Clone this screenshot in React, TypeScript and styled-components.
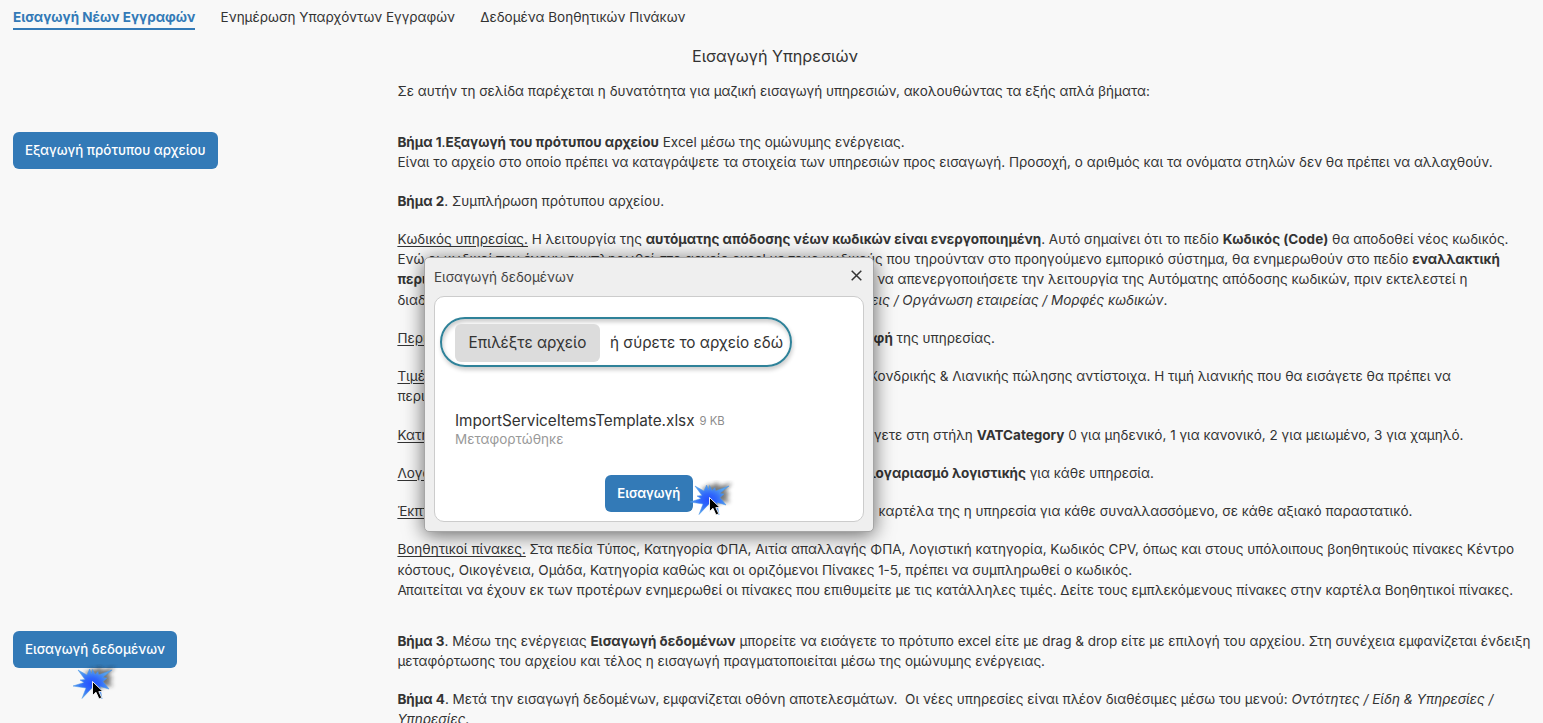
import React from 'react';
import styled, {createGlobalStyle} from "styled-components";

const theme = {
    primary: "#337ab7",
    text: "#333333",
    page: "#f8f8f8",
}

const GlobalStyle = createGlobalStyle`
  * {
    box-sizing: border-box;
  }

  body {
    margin: 0;
    height: 723px;
    overflow: hidden;
    background: ${theme.page};
    color: ${theme.text};
    font-family: Inter, "Liberation Sans", sans-serif;
    font-size: 13.5px;
    line-height: 1.5;
  }
`

const ClickMark = () => (
    <svg width="48" height="44" viewBox="0 0 48 44">
        <defs>
            <radialGradient id="burst" cx="0.48" cy="0.5" r="0.5">
                <stop offset="0" stopColor="#2450ff"/>
                <stop offset="0.4" stopColor="#2f66fb"/>
                <stop offset="1" stopColor="#56a4ee"/>
            </radialGradient>
            <filter id="soft" x="-30%" y="-30%" width="160%" height="160%">
                <feGaussianBlur stdDeviation="2"/>
            </filter>
        </defs>
        <path
            d="M14 7L19 8L20 4L24 6L29 2L31 6L44 3L37 11L42 14L38 17L42 22L33 22L27 26L20 22L14 19L17 15Z"
            fill="#222" opacity="0.6" filter="url(#soft)"/>
        <path
            d="M7 6L16 11L18.600 5L20.500 10L21.500 5.500L24 10.500L27 7.500L27.500 11L41 6L31.500 13.500L36 14L32 17.500L38 25L29 22.500L31 35L26 26L21 24L11 34.500L15 24L2 22L13 18.500L9 16L14 15.500Z"
            fill="url(#burst)" stroke="#4a94e6" strokeWidth="0.5"/>
        <path d="M21.500 17.500V31.500L25 28.300L28 35L30.800 33.700L27.800 27.600H32Z"
              fill="#000" stroke="#fff" strokeWidth="0.9"/>
    </svg>
)

const App = () => {
    return (
        <>
            <GlobalStyle/>
            <Tabs>
                <Tab $active>Εισαγωγή Νέων Εγγραφών</Tab>
                <Tab>Ενημέρωση Υπαρχόντων Εγγραφών</Tab>
                <Tab>Δεδομένα Βοηθητικών Πινάκων</Tab>
            </Tabs>
            <Title>Εισαγωγή Υπηρεσιών</Title>
            <Steps>
                <Side/>
                <Content>
                    <p>Σε αυτήν τη σελίδα παρέχεται η δυνατότητα για μαζική εισαγωγή υπηρεσιών, ακολουθώντας τα εξής απλά βήματα:</p>
                </Content>

                <Side>
                    <Button>Εξαγωγή πρότυπου αρχείου</Button>
                </Side>
                <Content>
                    <p>
                        <b>Βήμα 1</b>.<b>Εξαγωγή του πρότυπου αρχείου</b> Excel μέσω της ομώνυμης ενέργειας.<br/>
                        Είναι το αρχείο στο οποίο πρέπει να καταγράψετε τα στοιχεία των υπηρεσιών προς εισαγωγή. Προσοχή, ο αριθμός και τα ονόματα στηλών δεν θα πρέπει να αλλαχθούν.
                    </p>
                    <p><b>Βήμα 2</b>. Συμπλήρωση πρότυπου αρχείου.</p>
                    <div>
                        <u>Κωδικός υπηρεσίας.</u> Η λειτουργία της <b>αυτόματης απόδοσης νέων κωδικών είναι ενεργοποιημένη</b>. Αυτό σημαίνει ότι το πεδίο <b>Κωδικός (Code)</b> θα αποδοθεί νέος κωδικός.<br/>
                        Ενώ οι κωδικοί που έχουν συμπληρωθεί στο αρχείο excel με τους κωδικούς που τηρούνταν στο προηγούμενο εμπορικό σύστημα, θα ενημερωθούν στο πεδίο <b>εναλλακτική</b>
                        <Split $width={1070}>
                            <b>περι</b>
                            <span>να απενεργοποιήσετε την λειτουργία της Αυτόματης απόδοσης κωδικών, πριν εκτελεστεί η</span>
                        </Split>
                        <Split $width={770}>
                            <span>διαδ</span>
                            <span><i>Ρυθμίσεις / Οργάνωση εταιρείας / Μορφές κωδικών</i>.</span>
                        </Split>
                    </div>
                    <Split $width={597.5}>
                        <u>Περιγ</u>
                        <span><b>περιγραφή</b> της υπηρεσίας.</span>
                    </Split>
                    <div>
                        <Split $width={1053.5}>
                            <u>Τιμές</u>
                            <span>Χονδρικής &amp; Λιανικής πώλησης αντίστοιχα. Η τιμή λιανικής που θα εισάγετε θα πρέπει να</span>
                        </Split>
                        περι
                    </div>
                    <Split $width={1066}>
                        <u>Κατη</u>
                        <span>εισάγετε στη στήλη <b>VATCategory</b> 0 για μηδενικό, 1 για κανονικό, 2 για μειωμένο, 3 για χαμηλό.</span>
                    </Split>
                    <Split $width={756.5}>
                        <u>Λογα</u>
                        <span><b>λογαριασμό λογιστικής</b> για κάθε υπηρεσία.</span>
                    </Split>
                    <Split $width={1015}>
                        <u>Έκπτ</u>
                        <span>καρτέλα της η υπηρεσία για κάθε συναλλασσόμενο, σε κάθε αξιακό παραστατικό.</span>
                    </Split>
                    <p>
                        <u>Βοηθητικοί πίνακες.</u> Στα πεδία Τύπος, Κατηγορία ΦΠΑ, Αιτία απαλλαγής ΦΠΑ, Λογιστική κατηγορία, Κωδικός CPV, όπως και στους υπόλοιπους βοηθητικούς πίνακες Κέντρο<br/>
                        κόστους, Οικογένεια, Ομάδα, Κατηγορία καθώς και οι οριζόμενοι Πίνακες 1-5, πρέπει να συμπληρωθεί ο κωδικός.<br/>
                        Απαιτείται να έχουν εκ των προτέρων ενημερωθεί οι πίνακες που επιθυμείτε με τις κατάλληλες τιμές. Δείτε τους εμπλεκόμενους πίνακες στην καρτέλα Βοηθητικοί πίνακες.
                    </p>
                </Content>

                <Side>
                    <Button>Εισαγωγή δεδομένων</Button>
                    <Mark $left={71} $top={664}><ClickMark/></Mark>
                </Side>
                <Content>
                    <p>
                        <b>Βήμα 3</b>. Μέσω της ενέργειας <b>Εισαγωγή δεδομένων</b> μπορείτε να εισάγετε το πρότυπο excel είτε με drag &amp; drop είτε με επιλογή του αρχείου. Στη συνέχεια εμφανίζεται ένδειξη<br/>
                        μεταφόρτωσης του αρχείου και τέλος η εισαγωγή πραγματοποιείται μέσω της ομώνυμης ενέργειας.
                    </p>
                    <p>
                        <b>Βήμα 4</b>. Μετά την εισαγωγή δεδομένων, εμφανίζεται οθόνη αποτελεσμάτων.&nbsp; Οι νέες υπηρεσίες είναι πλέον διαθέσιμες μέσω του μενού: <i>Οντότητες / Είδη &amp; Υπηρεσίες /<br/>
                        Υπηρεσίες</i>.
                    </p>
                </Content>
            </Steps>

            <Modal>
                <ModalHeader>
                    <span>Εισαγωγή δεδομένων</span>
                    <svg width="11" height="11" viewBox="0 0 11 11">
                        <path d="M0.700 0.700L10.300 10.300M10.300 0.700L0.700 10.300" stroke="#333" strokeWidth="1.5"/>
                    </svg>
                </ModalHeader>
                <ModalBody>
                    <DropZone>
                        <PickButton>Επιλέξτε αρχείο</PickButton>
                        <span>ή σύρετε το αρχείο εδώ</span>
                    </DropZone>
                    <FileRow>
                        <FileName>ImportServiceItemsTemplate.xlsx</FileName>
                        <FileSize>9 KB</FileSize>
                    </FileRow>
                    <FileStatus>Μεταφορτώθηκε</FileStatus>
                    <SubmitButton>Εισαγωγή</SubmitButton>
                </ModalBody>
            </Modal>
            <Mark $left={688} $top={480}><ClickMark/></Mark>
        </>
    );
};

export default App;


const Tabs = styled.nav`
  display: flex;
  gap: 25.200px;
  height: 46px;
  padding: 7px 13px 0;
`

const Tab = styled.a<{ $active?: boolean }>`
  height: 23px;
  white-space: nowrap;
  color: ${props => props.$active ? theme.primary : theme.text};
  font-weight: ${props => props.$active ? 700 : 400};
  border-bottom: ${props => props.$active ? `2px solid ${theme.primary}` : "none"};
`

const Title = styled.h1`
  margin: 0;
  padding-left: 7px;
  height: 35.400px;
  font-size: 16.200px;
  font-weight: 400;
  line-height: 20px;
  text-align: center;
`

const Steps = styled.div`
  display: grid;
  grid-template-columns: 384.400px 1fr;
  row-gap: 30.450px;
  padding-left: 13px;
`

const Side = styled.div``

const Content = styled.div`
  display: flex;
  flex-direction: column;
  gap: 18px;
  white-space: nowrap;

  p {
    margin: 0;
  }

  b {
    font-weight: 700;
  }

  u {
    text-underline-offset: 2px;
  }
`

// line whose middle lies under the dialog
const Split = styled.div<{ $width: number }>`
  display: flex;
  justify-content: space-between;
  width: ${props => props.$width}px;
`

const Button = styled.button`
  height: 37px;
  padding: 0 12px 1px;
  border: none;
  border-radius: 6px;
  background: ${theme.primary};
  color: #fff;
  font-family: inherit;
  font-size: 13.35px;
  font-weight: 500;
  white-space: nowrap;
`

const Modal = styled.div`
  position: absolute;
  left: 424px;
  top: 257px;
  width: 450px;
  height: 275px;
  padding: 0 9px 9px;
  display: flex;
  flex-direction: column;
  background: #efefef;
  border: 1px solid #a5a5a5;
  border-radius: 5px;
  box-shadow: 0 3px 20px rgba(0, 0, 0, 0.6);
`

const ModalHeader = styled.div`
  display: flex;
  justify-content: space-between;
  align-items: center;
  height: 38px;
  padding-right: 2px;
  color: #444;

  svg {
    margin-bottom: 3px;
  }
`

const ModalBody = styled.div`
  flex: 1;
  display: flex;
  flex-direction: column;
  padding: 19.500px 5px 0 4.500px;
  background: #fff;
  border: 1px solid #ccc;
  border-radius: 10px;
`

const DropZone = styled.div`
  display: flex;
  align-items: center;
  gap: 10px;
  width: 352px;
  height: 50.500px;
  padding: 2px 0 0 13.500px;
  border: 2px solid #2f8299;
  border-radius: 26px;
  font-size: 15.3px;
  white-space: nowrap;
  box-shadow: 1px 3px 4px rgba(0, 0, 0, 0.2), inset 1px 3px 4px rgba(0, 0, 0, 0.2);

  span {
    padding-top: 1px;
  }
`

const PickButton = styled.button`
  width: 145px;
  height: 38px;
  padding: 0;
  border: none;
  border-radius: 6px;
  background: #dcdcdc;
  color: ${theme.text};
  font-family: inherit;
  font-size: 15.3px;
`

const FileRow = styled.div`
  display: flex;
  align-items: center;
  gap: 5px;
  height: 20px;
  margin-top: 44px;
  padding-left: 15.500px;
`

const FileName = styled.span`
  font-size: 15.3px;
`

const FileSize = styled.span`
  color: #8c8c8c;
  font-size: 11.3px;
`

const FileStatus = styled.span`
  height: 44px;
  padding-left: 15.500px;
  line-height: 17px;
  color: #999;
`

const SubmitButton = styled(Button)`
  align-self: center;
  width: 88px;
  font-size: 13.1px;
  font-weight: 600;
`

const Mark = styled.div<{ $left: number, $top: number }>`
  position: absolute;
  left: ${props => props.$left}px;
  top: ${props => props.$top}px;
  line-height: 0;
`
